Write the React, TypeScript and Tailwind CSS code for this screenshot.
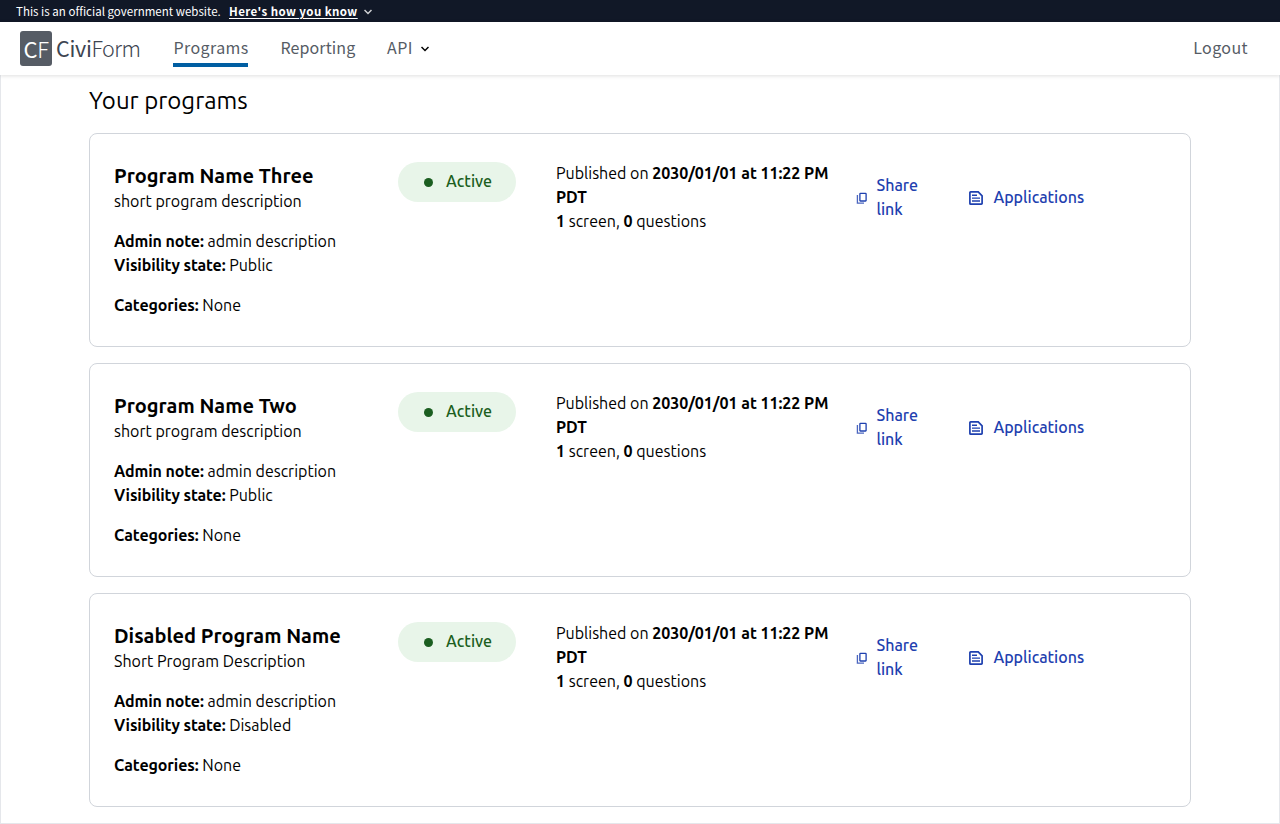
type Program = { name: string; description: string; visibility: string };

const programs: Program[] = [
  { name: "Program Name Three", description: "short program description", visibility: "Public" },
  { name: "Program Name Two", description: "short program description", visibility: "Public" },
  { name: "Disabled Program Name", description: "Short Program Description", visibility: "Disabled" },
];

function Chevron({ className }: { className: string }) {
  return (
    <svg viewBox="0 0 8 6" className={className} fill="none" stroke="currentColor" strokeWidth="1.5">
      <path d="M0.5 1 L4 4.5 L7.5 1" />
    </svg>
  );
}

function CopyIcon({ className }: { className: string }) {
  return (
    <svg viewBox="0 0 12 12" className={className} fill="none" stroke="currentColor" strokeWidth="1.3">
      <rect x="3.9" y="1.4" width="6.2" height="7.6" rx="0.5" />
      <path d="M1.4 3v8.1H8" opacity="0.8" />
    </svg>
  );
}

function DocumentIcon({ className }: { className: string }) {
  return (
    <svg viewBox="0 0 18 18" className={className} fill="none" stroke="currentColor" strokeWidth="1.7">
      <path d="M3.6 2.9h7.6l3.9 3.9v7.6a.7.7 0 0 1-.7.7H3.6a.7.7 0 0 1-.7-.7V3.6a.7.7 0 0 1 .7-.7z" />
      <path d="M5 6.2h5M5 9.1h8M5 12h8" strokeWidth="1.4" />
    </svg>
  );
}

function Card({ program }: { program: Program }) {
  return (
    <article className="flex h-[214px] items-start rounded-lg border border-[#d1d5db] pl-6 pt-[27px]">
      <div className="w-[284px] shrink-0">
        <h2 className="-mb-0.5 text-[20px] font-semibold leading-[30px]">{program.name}</h2>
        <p>{program.description}</p>
        <p className="mt-4"><b className="font-semibold tracking-[-0.1px]">Admin note:</b> <span>admin description</span></p>
        <p><b className="font-semibold tracking-[-0.12px]">Visibility state:</b> <span>{program.visibility}</span></p>
        <p className="mt-4"><b className="font-semibold tracking-[-0.1px]">Categories:</b> <span>None</span></p>
      </div>
      <div className="mt-px flex h-10 w-[118px] shrink-0 items-center rounded-full bg-[#e8f5e9] pl-[25.5px] text-[#1b5e20]">
        <span className="mr-[13.5px] size-[9px] rounded-full bg-[#1b5e20]" />
        <span className="-mt-0.5 font-medium">Active</span>
      </div>
      <div className="ml-10 w-[300px] shrink-0">
        <p><span>Published on</span> <b className="font-semibold tracking-[-0.04px]">2030/01/01 at 11:22 PM<br />PDT</b></p>
        <p><b className="font-semibold">1</b> screen, <b className="font-semibold">0</b> questions</p>
      </div>
      <div className="mt-3 flex w-[111px] shrink-0 items-center font-medium text-[#1e40af]">
        <CopyIcon className="mr-[8.5px] mt-0.5 size-3" />
        <span>Share<br />link</span>
      </div>
      <div className="mt-6 flex items-center font-medium text-[#1e40af]">
        <DocumentIcon className="mr-[8.4px] mt-0.5 size-[18px]" />
        <span>Applications</span>
      </div>
    </article>
  );
}

export default function App() {
  return (
    <div className="flex h-[824px] w-[1280px] flex-col overflow-hidden bg-white font-['Ubuntu','Open_Sans',sans-serif] text-base leading-6 text-black">
      <div className="flex h-[22px] shrink-0 items-center bg-[#111827] pl-4 font-['Source_Sans_Pro','Noto_Sans_CJK_SC',sans-serif] text-[11.5px] leading-[22px] text-white">
        <span className="w-[205px] whitespace-nowrap tracking-[0.02px]">This is an official government website.</span>
        <b className="ml-2 tracking-[0.42px] underline underline-offset-2">Here's how you know</b>
        <Chevron className="ml-1.5 mt-0.5 h-1.5 w-2 opacity-80" />
      </div>
      <header className="z-10 flex h-[53px] shrink-0 items-center bg-white pl-5 pr-8 font-['Source_Sans_Pro','Noto_Sans_CJK_SC',sans-serif] text-[16px] leading-6 tracking-[0.4px] text-[#565c65] shadow-[0_1px_4px_rgba(0,0,0,0.13)]">
        <div className="flex h-[35px] w-8 items-center justify-center rounded-[3px] bg-[#565c65] pb-0.5 text-[22px] tracking-[-0.3px] text-white">
          <span>C</span><span className="font-light">F</span>
        </div>
        <div className="-mt-0.5 ml-1 w-[117px] text-[21.5px] tracking-[-0.3px] text-[#3d4551]"><span>Civi</span><span className="font-light tracking-[-0.6px]">Form</span></div>
        <nav className="-mt-[3px] flex h-full items-center">
          <a className="relative w-[75px] pl-[0.5px]"><span>Programs</span>
            <i className="absolute -bottom-2 left-0 h-1 w-[75px] bg-[#005ea2]" />
          </a>
          <a className="ml-8 w-[75px] pl-[0.5px] tracking-[0.1px]">Reporting</a>
          <a className="ml-8 w-[26px]">API</a>
          <Chevron className="ml-2 mt-1 h-1.5 w-2 text-black" />
        </nav>
        <a className="-mt-[3px] ml-auto">Logout</a>
      </header>
      <main className="min-h-0 grow border-x border-b border-[#e5e7eb] px-[88px] pt-[9px]">
        <h1 className="mb-4 text-[24px] leading-[33px]">Your programs</h1>
        <div className="flex flex-col gap-4">
          {programs.map((p) => <Card key={p.name} program={p} />)}
        </div>
      </main>
    </div>
  );
}
